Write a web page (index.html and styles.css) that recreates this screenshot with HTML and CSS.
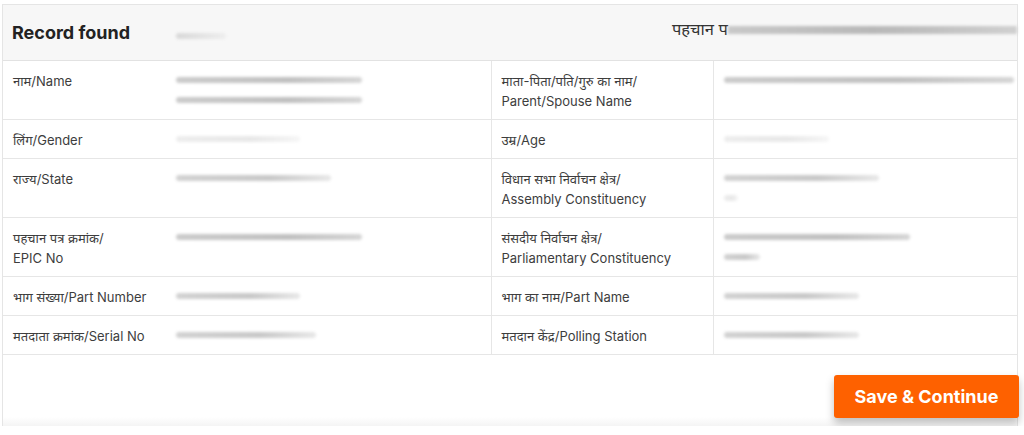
FILE: index.html
```html
<!DOCTYPE html>
<html lang="hi">
<head>
    <meta charset="UTF-8">
    <meta name="viewport" content="width=device-width, initial-scale=1.0">
    <title>Record found</title>
    <link rel="stylesheet" href="styles.css">
</head>
<body>

    <div class="card">
        <div class="card-header">
            <h2>Record found</h2>
            <span class="smudge smudge-head"></span>
            <div class="epic-head">
                <span>पहचान प</span>
                <span class="smudge smudge-epic"></span>
            </div>
        </div>

        <table class="record">
            <colgroup>
                <col class="c-label">
                <col class="c-value">
                <col class="c-label2">
                <col class="c-value2">
            </colgroup>
            <tbody>
                <tr>
                    <td>नाम/Name</td>
                    <td>
                        <span class="smudge w186 dark"></span>
                        <span class="smudge w186 dark second"></span>
                    </td>
                    <td class="sep">माता-पिता/पति/गुरु का नाम/<br>Parent/Spouse Name</td>
                    <td class="sep"><span class="smudge w290 dark"></span></td>
                </tr>
                <tr>
                    <td>लिंग/Gender</td>
                    <td><span class="smudge w124 light"></span></td>
                    <td class="sep">उम्र/Age</td>
                    <td class="sep"><span class="smudge w105 light"></span></td>
                </tr>
                <tr>
                    <td>राज्य/State</td>
                    <td><span class="smudge w155"></span></td>
                    <td class="sep">विधान सभा निर्वाचन क्षेत्र/<br>Assembly Constituency</td>
                    <td class="sep">
                        <span class="smudge w155"></span>
                        <span class="smudge w14 light second"></span>
                    </td>
                </tr>
                <tr>
                    <td>पहचान पत्र क्रमांक/<br>EPIC No</td>
                    <td><span class="smudge w186 dark"></span></td>
                    <td class="sep">संसदीय निर्वाचन क्षेत्र/<br>Parliamentary Constituency</td>
                    <td class="sep">
                        <span class="smudge w186 dark"></span>
                        <span class="smudge w36 second"></span>
                    </td>
                </tr>
                <tr>
                    <td>भाग संख्या/Part Number</td>
                    <td><span class="smudge w124"></span></td>
                    <td class="sep">भाग का नाम/Part Name</td>
                    <td class="sep"><span class="smudge w135"></span></td>
                </tr>
                <tr>
                    <td>मतदाता क्रमांक/Serial No</td>
                    <td><span class="smudge w140"></span></td>
                    <td class="sep">मतदान केंद्र/Polling Station</td>
                    <td class="sep"><span class="smudge w135"></span></td>
                </tr>
            </tbody>
        </table>

        <div class="card-footer">
            <button class="save-button">Save &amp; Continue</button>
        </div>
    </div>

</body>
</html>
```

FILE: styles.css
```css
body {
    font-family: 'Inter', 'Noto Sans Devanagari', 'Noto Sans', sans-serif;
    background-color: #ffffff;
    color: #3a3a3a;
    margin: 0;
    padding: 4px 6px 0 2px;
}
.card {
    border: 1px solid #e5e5e5;
    border-bottom: none;
    height: 421px;
    display: flex;
    flex-direction: column;
    background: linear-gradient(to bottom, #ffffff 0, #ffffff 412px, #e8e8e8 431px);
}
.card-header {
    height: 55px;
    display: flex;
    align-items: center;
    padding: 0 0 0 9px;
    background-color: #f7f7f7;
    border-bottom: 1px solid #e2e2e2;
}
.card-header h2 {
    margin: 0;
    font-size: 18px;
    font-weight: 700;
    color: #222;
    width: 164px;
}
.epic-head {
    margin-left: auto;
    display: flex;
    align-items: center;
    font-size: 16.5px;
    color: #333;
    margin-top: -5px;
}

/* tabla de datos */
.record {
    width: 100%;
    border-collapse: collapse;
    table-layout: fixed;
    font-size: 13px;
}
.c-label { width: 163px; }
.c-value { width: 325px; }
.c-label2 { width: 222px; }
.record td {
    padding: 10px 10px 8px;
    line-height: 20px;
    vertical-align: top;
    border-bottom: 1px solid #e6e6e6;
    color: #3d3d3d;
}
.record td.sep {
    border-left: 1px solid #e6e6e6;
}

/* datos ocultos (borrosos) */
.smudge {
    display: block;
    height: 6px;
    margin-top: 6px;
    border-radius: 3px;
    background: linear-gradient(to right, #d2d2d2, #c8c8c8 60%, #e8e8e8);
    filter: blur(1.5px);
}
.smudge.dark { background: linear-gradient(to right, #cbcbcb, #c0c0c0 60%, #d6d6d6); }
.smudge.light { background: linear-gradient(to right, #ededed, #e8e8e8 60%, #f6f6f6); }
.smudge.second { margin-top: 14px; }
.smudge-head {
    display: inline-block;
    width: 50px;
    margin-top: 6px;
    background: linear-gradient(to right, #d8d8d8, #eeeeee);
}
.smudge-epic {
    display: inline-block;
    width: 289px;
    height: 8px;
    margin: 0;
    border-radius: 0;
    background: linear-gradient(to right, #c8c8c8, #b8b8b8 50%, #c0c0c0 70%, #d0d0d0);
}
.w14 { width: 14px; }
.w36 { width: 36px; }
.w105 { width: 105px; }
.w124 { width: 124px; }
.w135 { width: 135px; }
.w140 { width: 140px; }
.w155 { width: 155px; }
.w186 { width: 186px; }
.w290 { width: 290px; }

.card-footer {
    display: flex;
    justify-content: flex-end;
    padding: 20px 0 0 0;
    margin-right: -2px;
}
.save-button {
    background-color: #fe6100;
    color: white;
    border: none;
    width: 185px;
    height: 43px;
    font-family: 'Inter', sans-serif;
    font-size: 18px;
    font-weight: 700;
    cursor: pointer;
    border-radius: 3px;
    box-shadow: 0 5px 8px rgba(0, 0, 0, 0.25);
}
.save-button:hover {
    background-color: #ff7a26;
}
```
